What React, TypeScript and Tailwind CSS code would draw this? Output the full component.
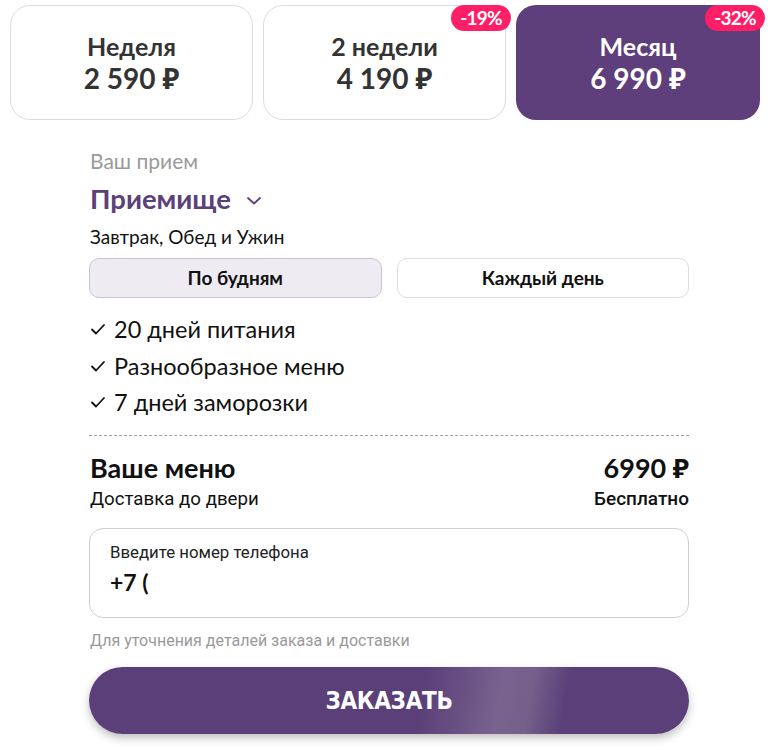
import React from "react";

const plans = [
  { title: "Неделя", price: "2 590 ₽", badge: null as string | null, active: false },
  { title: "2 недели", price: "4 190 ₽", badge: "-19%", active: false },
  { title: "Месяц", price: "6 990 ₽", badge: "-32%", active: true },
];

function Check() {
  return (
    <svg width="16" height="16" viewBox="0 0 16 16" className="shrink-0">
      <path d="M2 8.5 L6 12.5 L14 4" fill="none" stroke="#111" strokeWidth="1.8" strokeLinecap="round" strokeLinejoin="round" />
    </svg>
  );
}

export default function App() {
  return (
    <div className="w-[778px] h-[750px] bg-white overflow-hidden" style={{ fontFamily: "Lato, 'Noto Sans', sans-serif" }}>
      <div className="flex gap-[10px] pl-[10px] pt-[5px]">
        {plans.map((p) => (
          <div
            key={p.title}
            className={
              p.active
                ? "relative w-[244px] h-[115px] rounded-[20px] bg-[#5f3f7b] text-white flex flex-col items-center justify-center"
                : "relative w-[243px] h-[115px] rounded-[20px] bg-white border border-[#dcdae6] text-[#333333] flex flex-col items-center justify-center"
            }
          >
            <div className="text-[25px] font-bold leading-[30px]">{p.title}</div>
            <div className="text-[28px] font-bold leading-[34px]">{p.price}</div>
            {p.badge && (
              <div
                className={
                  p.active
                    ? "absolute top-0 right-[-5px] h-[26px] w-[60px] rounded-full bg-[#ff1f66] text-white text-[19px] font-bold leading-[26px] tracking-[-0.8px] text-center"
                    : "absolute top-[-1px] right-[-6px] h-[26px] w-[60px] rounded-full bg-[#ff1f66] text-white text-[19px] font-bold leading-[26px] tracking-[-0.8px] text-center"
                }
              >
                {p.badge}
              </div>
            )}
          </div>
        ))}
      </div>

      <div className="ml-[89px] w-[600px] mt-[28px]">
        <div className="text-[21px] text-[#9a9a9a] leading-[26px] pl-[1px]">Ваш прием</div>
        <div className="flex items-center gap-[15px] mt-[9px] pl-[1px] h-[32px]">
          <span className="text-[27.5px] font-bold text-[#5c407a] leading-[32px]">Приемище</span>
          <svg width="16" height="10" viewBox="0 0 16 10" className="mt-[3px]">
            <path d="M2 2 L8 7.5 L14 2" fill="none" stroke="#5c407a" strokeWidth="1.8" strokeLinecap="round" strokeLinejoin="round" />
          </svg>
        </div>
        <div className="text-[19px] text-[#111] leading-[24px] mt-[10px] pl-[1px]">Завтрак, Обед и Ужин</div>

        <div className="flex gap-[15px] mt-[9px]">
          <div className="flex-1 h-[40px] rounded-[10px] bg-[#eeecf2] border border-[#c9c2d3] flex items-center justify-center text-[19px] font-bold text-[#111]">
            По будням
          </div>
          <div className="flex-1 h-[40px] rounded-[10px] bg-white border border-[#dedbe7] flex items-center justify-center text-[19px] font-bold text-[#111]">
            Каждый день
          </div>
        </div>

        <div className="mt-[17px] flex flex-col gap-[8.5px] pl-[1px]">
          {["20 дней питания", "Разнообразное меню", "7 дней заморозки"].map((t) => (
            <div key={t} className="flex items-center gap-[8px] text-[23.5px] text-[#111] leading-[28px]">
              <Check />
              <span>{t}</span>
            </div>
          ))}
        </div>

        <div className="mt-[19px] border-t border-dashed border-[#a0a0a0]" />

        <div className="mt-[16px] flex justify-between items-center pl-[1px]">
          <span className="text-[27px] font-bold text-[#111] leading-[32px]">Ваше меню</span>
          <span className="text-[27px] font-bold text-[#111] leading-[32px]">6990 ₽</span>
        </div>
        <div className="mt-[3px] flex justify-between items-center pl-[1px]" style={{ fontFamily: "Roboto, sans-serif" }}>
          <span className="text-[18.7px] text-[#111] leading-[24px]">Доставка до двери</span>
          <span className="text-[19px] font-medium text-[#111] leading-[24px]">Бесплатно</span>
        </div>

        <div className="mt-[17px] h-[90px] rounded-[14px] border border-[#cfcfcf] px-[20px] pt-[13px]">
          <div className="text-[16.8px] text-[#222] leading-[20px]" style={{ fontFamily: "Roboto, sans-serif" }}>Введите номер телефона</div>
          <div className="text-[23px] font-bold text-[#111] leading-[30px] mt-[5px]">+7 (</div>
        </div>

        <div className="mt-[13px] text-[16px] text-[#9a9a9a] leading-[20px] pl-[1px]" style={{ fontFamily: "Roboto, sans-serif" }}>
          Для уточнения деталей заказа и доставки
        </div>

        <div
          className="mt-[16px] h-[67px] rounded-full flex items-center justify-center text-white text-[24px] font-bold tracking-[-0.3px] shadow-[0_4px_8px_rgba(0,0,0,0.25)]"
          style={{
            fontFamily: "'DejaVu Sans Condensed', Roboto, sans-serif",
            background:
              "linear-gradient(100deg, #5a3f78 0%, #5a3f78 55%, #6a5184 62%, #79628f 68%, #74608b 73%, #5a3f78 79%, #5a3f78 100%)",
          }}
        >
          ЗАКАЗАТЬ
        </div>
      </div>
    </div>
  );
}
